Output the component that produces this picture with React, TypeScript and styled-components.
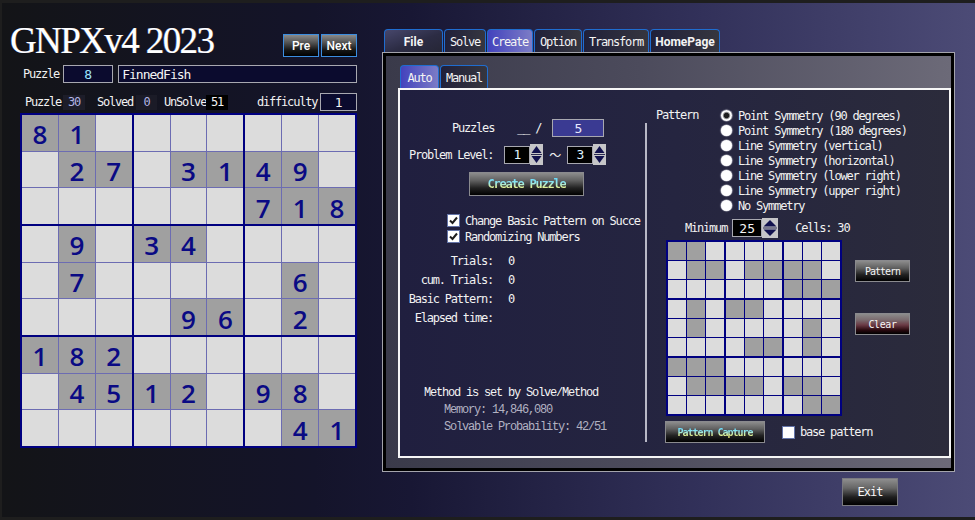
import React from "react";
import styled, { createGlobalStyle } from "styled-components";

const GOTHIC = '"DejaVu Sans Mono", "Liberation Mono", "Noto Sans CJK JP", monospace';
const MINCHO = '"Liberation Mono", "DejaVu Sans Mono", monospace';
const SANS = 'Roboto, "Liberation Sans", sans-serif';

const Global = createGlobalStyle`
  html, body { margin: 0; padding: 0; background: #1e1e1e; }
  body { font-family: ${GOTHIC}; font-size: 12px; }
  #root { width: 975px; height: 520px; }
  * { box-sizing: border-box; }
`;

const Window = styled.div`
  width: 975px;
  height: 520px;
  border-top: 3px solid #1e1e1e;
  border-left: 2px solid #1e1e1e;
  border-bottom: 3px solid #1e1e1e;
  background: linear-gradient(90deg, #131417 0%, #14142a 32%, #181734 42%, #32315a 72%, #4c4b76 100%);
  display: flex;
  padding-left: 8px;
  overflow: hidden;
  color: #f2f2f2;
  font-family: ${GOTHIC};
  font-size: 12px;
  letter-spacing: -1.2px;
`;

/* ---------- left pane ---------- */
const LeftPane = styled.div`
  width: 347px;
  padding-top: 19px;
  display: flex;
  flex-direction: column;
`;

const TitleRow = styled.div`
  display: flex;
  justify-content: space-between;
  height: 37px;
`;

const Title = styled.h1`
  margin: 0;
  font-family: "Liberation Serif", "DejaVu Serif", serif;
  font-weight: normal;
  font-size: 37px;
  line-height: 37px;
  letter-spacing: -1.6px;
  color: #ffffff;
  text-shadow: -0.6px 0 rgba(90, 140, 255, 0.55), 0.6px 0 rgba(255, 200, 120, 0.45);
`;

const NavButtons = styled.div`
  display: flex;
  gap: 2px;
  margin-top: 12px;
`;

const NavButton = styled.button`
  width: 36px;
  height: 23px;
  padding: 0;
  border: 1px solid #3b8de0;
  background: linear-gradient(180deg, #8a8a8a 0%, #555 35%, #181818 70%, #000 100%);
  color: #fff;
  font-family: ${SANS};
  font-weight: 500;
  font-size: 12px;
  letter-spacing: 0;
`;

const PuzzleRow = styled.div`
  display: flex;
  align-items: center;
  margin-top: 6px;
  padding-left: 13px;
  height: 18px;
`;

const Label = styled.span`
  white-space: pre;
  color: #f2f2f2;
`;

const NumField = styled.div<{ $w: number; $bg?: string; $color?: string; $ml?: number }>`
  width: ${(p) => p.$w}px;
  height: 18px;
  margin-left: ${(p) => p.$ml ?? 0}px;
  border: 1px solid #a8a8b0;
  background: ${(p) => p.$bg ?? "#0b0b2e"};
  color: ${(p) => p.$color ?? "#f4f4f4"};
  display: flex;
  align-items: center;
  justify-content: center;
  font-size: 13px;
  letter-spacing: 0;
`;

const NameField = styled.div`
  flex: 1;
  height: 18px;
  margin-left: 5px;
  border: 1px solid #a8a8b0;
  background: #0b0b2e;
  color: #f4f4f4;
  font-size: 13px;
  letter-spacing: -1px;
  padding-left: 3px;
  display: flex;
  align-items: center;
`;

const StatsRow = styled.div`
  display: flex;
  align-items: center;
  margin-top: 10px;
  padding-left: 15px;
  height: 18px;
`;

const StatBox = styled.span<{ $w: number; $bg: string; $color: string; $ml: number }>`
  width: ${(p) => p.$w}px;
  height: 15px;
  margin-left: ${(p) => p.$ml}px;
  background: ${(p) => p.$bg};
  color: ${(p) => p.$color};
  display: inline-flex;
  align-items: center;
  justify-content: center;
`;

const StatText = styled.span<{ $ml: number }>`
  margin-left: ${(p) => p.$ml}px;
  white-space: pre;
`;

/* ---------- boards ---------- */
const Board = styled.div<{ $w: number; $h: number; $ml: number; $mt: number }>`
  width: ${(p) => p.$w}px;
  height: ${(p) => p.$h}px;
  margin-left: ${(p) => p.$ml}px;
  margin-top: ${(p) => p.$mt}px;
  border: 2px solid #000080;
  background: #000080;
  display: grid;
  grid-template-columns: repeat(3, 1fr);
  grid-template-rows: repeat(3, 1fr);
  gap: 2px;
  flex-shrink: 0;
`;

const Block = styled.div<{ $line: string }>`
  display: grid;
  grid-template-columns: repeat(3, 1fr);
  grid-template-rows: repeat(3, 1fr);
  gap: 1px;
  background: ${(p) => p.$line};
`;

const Cell = styled.div<{ $given: boolean }>`
  background: ${(p) => (p.$given ? "#a0a0a0" : "#dcdcdc")};
  display: flex;
  align-items: center;
  justify-content: center;
  padding-top: 3px;
  font-family: "Open Sans", "Noto Sans", sans-serif;
  font-weight: 600;
  font-size: 26px;
  letter-spacing: 0;
  color: #0a0a84;
  line-height: 1;
`;

const PatternCell = styled.div<{ $given: boolean }>`
  background: ${(p) => (p.$given ? "#a0a0a0" : "#dcdcdc")};
`;

/* ---------- right pane ---------- */
const RightPane = styled.div`
  margin-left: 25px;
  width: 573px;
  padding-top: 26px;
  display: flex;
  flex-direction: column;
`;

const TabStrip = styled.div`
  display: flex;
  gap: 1px;
  height: 23px;
  margin-left: 2px;
`;

type TabKind = "file" | "normal" | "active";

const tabBg: Record<TabKind, string> = {
  file: "linear-gradient(160deg, #47476c 0%, #2c2c44 55%, #262636 100%)",
  normal: "linear-gradient(90deg, #20203a 0%, #36363f 100%)",
  active: "linear-gradient(90deg, #4343bd 0%, #7c7cc6 100%)",
};

const Tab = styled.div<{ $w: number; $kind: TabKind; $sans?: boolean }>`
  width: ${(p) => p.$w}px;
  height: 23px;
  border: 1px solid #1f6dd0;
  border-bottom: none;
  border-radius: 4px 4px 0 0;
  background: ${(p) => tabBg[p.$kind]};
  display: flex;
  align-items: center;
  justify-content: center;
  color: #f4f4f4;
  font-family: ${(p) => (p.$sans ? SANS : GOTHIC)};
  font-weight: ${(p) => (p.$sans ? 700 : 400)};
  font-size: 12px;
  letter-spacing: ${(p) => (p.$sans ? "0" : "-1.2px")};
  padding-top: 1px;
`;

const Panel = styled.div`
  width: 573px;
  height: 420px;
  border: 1px solid #a4a4ac;
`;

const PageArea = styled.div`
  height: 100%;
  border: 3px solid #000;
  background: linear-gradient(90deg, #3a3a4a 0%, #4c4b5c 45%, #6c6a78 100%);
  padding: 9px 0 10px 12px;
  display: flex;
  flex-direction: column;
`;

const InnerBox = styled.div`
  flex: 1;
  border: 2px solid #f6f6f6;
  background: linear-gradient(90deg, #201f3f 0%, #252540 50%, #2b2b3b 100%);
  display: flex;
`;

const LeftCol = styled.div`
  width: 245px;
  padding-top: 29px;
  display: flex;
  flex-direction: column;
  flex-shrink: 0;
  overflow: hidden;
`;

const FormRow = styled.div<{ $h: number; $mt: number; $pl: number }>`
  display: flex;
  align-items: center;
  height: ${(p) => p.$h}px;
  margin-top: ${(p) => p.$mt}px;
  padding-left: ${(p) => p.$pl}px;
`;

const Tilde = styled.span`
  width: 12px;
  margin-left: 6px;
  margin-right: 6px;
  text-align: center;
  font-family: "Noto Sans CJK JP", sans-serif;
  font-size: 12px;
  letter-spacing: 0;
`;

const GlossButton = styled.button<{ $w: number; $h: number; $ml?: number; $tone?: "gray" | "red" }>`
  width: ${(p) => p.$w}px;
  height: ${(p) => p.$h}px;
  margin-left: ${(p) => p.$ml ?? 0}px;
  padding: 0;
  flex-shrink: 0;
  border: 1px solid #8a8a8e;
  background: ${(p) =>
    p.$tone === "red"
      ? "linear-gradient(180deg, #8c8c8c 0%, #7a6a6e 30%, #6a3a44 55%, #2a0a10 80%, #000 100%)"
      : "linear-gradient(180deg, #8c8c8c 0%, #606060 35%, #222 68%, #000 100%)"};
  color: #f4f4f4;
  font-family: ${GOTHIC};
  display: flex;
  align-items: center;
  justify-content: center;
`;

const GlowText = styled.span<{ $size: number; $char: number }>`
  font-weight: bold;
  font-size: ${(p) => p.$size}px;
  letter-spacing: ${(p) => p.$char - p.$size * 0.602}px;
  background: linear-gradient(180deg, #5fd8ff 0%, #8fe6f0 40%, #d8f0a0 70%, #f6ee70 100%);
  -webkit-background-clip: text;
  background-clip: text;
  color: transparent;
`;

const ButtonText = styled.span<{ $size: number; $char: number }>`
  font-size: ${(p) => p.$size}px;
  letter-spacing: ${(p) => p.$char - p.$size * 0.602}px;
  color: #f6f6f6;
`;

const CheckBoxBox = styled.span`
  width: 13px;
  height: 13px;
  border: 1px solid #6474a8;
  background: #fff;
  display: inline-flex;
  flex-shrink: 0;
`;

const CheckLine = styled.div<{ $mt: number; $pl: number }>`
  display: flex;
  align-items: center;
  height: 13px;
  gap: 5px;
  margin-top: ${(p) => p.$mt}px;
  padding-left: ${(p) => p.$pl}px;
  white-space: pre;
`;

const StatsList = styled.div`
  margin-top: 8px;
  display: flex;
  flex-direction: column;
`;

const StatLine = styled.div`
  display: flex;
  align-items: center;
  height: 19px;
`;

const StatName = styled.span`
  width: 93px;
  text-align: right;
  white-space: pre;
`;

const StatNum = styled.span`
  margin-left: 15px;
`;

const MethodBlock = styled.div`
  margin-top: 58px;
  font-family: ${MINCHO};
  display: flex;
  flex-direction: column;
`;

const MethodLine = styled.div<{ $indent: number; $dim?: boolean }>`
  height: 17px;
  line-height: 17px;
  padding-left: ${(p) => p.$indent}px;
  color: ${(p) => (p.$dim ? "#b2b2c2" : "#f4f4f4")};
  white-space: pre;
`;

const Separator = styled.div`
  width: 2px;
  height: 319px;
  margin-top: 33px;
  background: #b8b8c6;
  flex-shrink: 0;
`;

const RightCol = styled.div`
  flex: 1;
  padding-top: 18px;
  display: flex;
  flex-direction: column;
`;

const PatternSection = styled.div`
  display: flex;
`;

const PatternLabel = styled.div`
  width: 74px;
  padding-left: 9px;
  height: 15px;
  line-height: 15px;
`;

const RadioList = styled.div`
  display: flex;
  flex-direction: column;
`;

const RadioRow = styled.div`
  display: flex;
  align-items: center;
  gap: 6px;
  height: 15px;
  white-space: pre;
`;

const RadioDot = styled.span<{ $on?: boolean }>`
  width: 11px;
  height: 11px;
  border-radius: 50%;
  background: ${(p) =>
    p.$on
      ? "radial-gradient(circle, #1e1e1e 0 2.3px, #6a6a6a 2.8px, #bdbdbd 3.6px, #fff 4.2px)"
      : "#ffffff"};
  box-shadow: 0 0 1px 0.6px rgba(210, 210, 220, 0.8);
  flex-shrink: 0;
`;

const GridArea = styled.div`
  display: flex;
  margin-top: 2px;
`;

const SideButtons = styled.div`
  display: flex;
  flex-direction: column;
  gap: 31px;
  margin-left: 13px;
  padding-top: 20px;
`;

const CaptureRow = styled.div`
  display: flex;
  align-items: center;
  margin-top: 5px;
  padding-left: 18px;
`;

const BaseCheck = styled.span`
  width: 13px;
  height: 13px;
  margin-left: 17px;
  border: 1px solid #6474a8;
  background: #fff;
  flex-shrink: 0;
`;

const BaseLabel = styled.span`
  margin-left: 5px;
  font-size: 12px;
  letter-spacing: -1.2px;
`;

const ExitRow = styled.div`
  display: flex;
  justify-content: flex-end;
  padding-right: 57px;
  margin-top: 6px;
`;

const ExitButton = styled.button`
  width: 56px;
  height: 28px;
  padding: 0;
  border: 1px solid #7a7a80;
  background: linear-gradient(180deg, #8e8e8e 0%, #666 35%, #1e1e1e 70%, #000 100%);
  color: #f6f6f6;
  font-family: ${GOTHIC};
  font-size: 12px;
  letter-spacing: -1px;
`;

const SpinnerWrap = styled.span`
  display: inline-flex;
  flex-shrink: 0;
`;

/* ---------- small drawings ---------- */
function Spinner({ w, h }: { w: number; h: number }) {
  const mid = h / 2;
  return (
    <SpinnerWrap>
      <svg width={w} height={h} viewBox={`0 0 ${w} ${h}`}>
        <rect x="0" y="0" width={w} height={h} fill="#c6c6c8" />
        <polygon points={`${w / 2},2 ${w - 1.5},${mid - 1.5} 1.5,${mid - 1.5}`} fill="#12124e" />
        <rect x="1" y={mid - 0.5} width={w - 2} height="1" fill="#2a2a50" />
        <polygon points={`1.5,${mid + 1.5} ${w - 1.5},${mid + 1.5} ${w / 2},${h - 2}`} fill="#12124e" />
      </svg>
    </SpinnerWrap>
  );
}

function CheckBox() {
  return (
    <CheckBoxBox>
      <svg width="11" height="11" viewBox="0 0 11 11">
        <polyline points="2,5.5 4.5,8 9,2.5" fill="none" stroke="#1e1e1e" strokeWidth="2" />
      </svg>
    </CheckBoxBox>
  );
}

/* ---------- data ---------- */
const PUZZLE = [
  "81.......",
  ".27.3149.",
  "......718",
  ".9.34....",
  ".7.....6.",
  "....96.2.",
  "182......",
  ".4512.98.",
  ".......41",
];

const blocks = [0, 1, 2, 3, 4, 5, 6, 7, 8];

function SudokuBoard() {
  return (
    <Board $w={337} $h={335} $ml={10} $mt={2}>
      {blocks.map((b) => (
        <Block key={b} $line="#6c6cb2">
          {blocks.map((i) => {
            const r = Math.floor(b / 3) * 3 + Math.floor(i / 3);
            const c = (b % 3) * 3 + (i % 3);
            const ch = PUZZLE[r][c];
            const given = ch !== ".";
            return (
              <Cell key={i} $given={given}>
                {given ? ch : ""}
              </Cell>
            );
          })}
        </Block>
      ))}
    </Board>
  );
}

function PatternBoard() {
  return (
    <Board $w={176} $h={176} $ml={19} $mt={0}>
      {blocks.map((b) => (
        <Block key={b} $line="#000080">
          {blocks.map((i) => {
            const r = Math.floor(b / 3) * 3 + Math.floor(i / 3);
            const c = (b % 3) * 3 + (i % 3);
            return <PatternCell key={i} $given={PUZZLE[r][c] !== "."} />;
          })}
        </Block>
      ))}
    </Board>
  );
}

const radios = [
  "Point Symmetry (90 degrees)",
  "Point Symmetry (180 degrees)",
  "Line Symmetry (vertical)",
  "Line Symmetry (horizontal)",
  "Line Symmetry (lower right)",
  "Line Symmetry (upper right)",
  "No Symmetry",
];

export default function App() {
  return (
    <>
      <Global />
      <Window>
        <LeftPane>
          <TitleRow>
            <Title>GNPXv4 2023</Title>
            <NavButtons>
              <NavButton>Pre</NavButton>
              <NavButton>Next</NavButton>
            </NavButtons>
          </TitleRow>
          <PuzzleRow>
            <Label>Puzzle</Label>
            <NumField $w={50} $ml={4} $color="#9fe6ff">
              8
            </NumField>
            <NameField>FinnedFish</NameField>
          </PuzzleRow>
          <StatsRow>
            <StatText $ml={0}>Puzzle</StatText>
            <StatBox $w={22} $ml={2} $bg="#1d1d29" $color="#b2b4e4">
              30
            </StatBox>
            <StatText $ml={12}>Solved</StatText>
            <StatBox $w={21} $ml={3} $bg="#1b1b27" $color="#b2b4e4">
              0
            </StatBox>
            <StatText $ml={7}>UnSolve</StatText>
            <StatBox $w={22} $ml={0} $bg="#000" $color="#f4f4f4">
              51
            </StatBox>
            <StatText $ml={29}>difficulty</StatText>
            <NumField $w={37} $ml={3}>
              1
            </NumField>
          </StatsRow>
          <SudokuBoard />
        </LeftPane>

        <RightPane>
          <TabStrip>
            <Tab $w={59} $kind="file" $sans>
              File
            </Tab>
            <Tab $w={42} $kind="normal">
              Solve
            </Tab>
            <Tab $w={46} $kind="active">
              Create
            </Tab>
            <Tab $w={48} $kind="normal">
              Option
            </Tab>
            <Tab $w={66} $kind="normal">
              Transform
            </Tab>
            <Tab $w={70} $kind="normal" $sans>
              HomePage
            </Tab>
          </TabStrip>
          <Panel>
            <PageArea>
              <TabStrip>
                <Tab $w={39} $kind="active">
                  Auto
                </Tab>
                <Tab $w={48} $kind="normal">
                  Manual
                </Tab>
              </TabStrip>
              <InnerBox>
                <LeftCol>
                  <FormRow $h={18} $mt={0} $pl={52}>
                    <Label>Puzzles</Label>
                    <StatText $ml={23}>__ /</StatText>
                    <NumField $w={52} $ml={11} $bg="#3a3a92" $color="#e8e8ff">
                      5
                    </NumField>
                  </FormRow>
                  <FormRow $h={21} $mt={7} $pl={9}>
                    <Label>Problem Level:</Label>
                    <NumField $w={26} $ml={11} $bg="#000" $color="#dff0ff">
                      1
                    </NumField>
                    <Spinner w={13} h={21} />
                    <Tilde>〜</Tilde>
                    <NumField $w={26} $bg="#000" $color="#dff0ff">
                      3
                    </NumField>
                    <Spinner w={13} h={21} />
                  </FormRow>
                  <FormRow $h={24} $mt={7} $pl={69}>
                    <GlossButton $w={115} $h={24}>
                      <GlowText $size={12} $char={6}>
                        Create Puzzle
                      </GlowText>
                    </GlossButton>
                  </FormRow>
                  <CheckLine $mt={18} $pl={47}>
                    <CheckBox />
                    <span>Change Basic Pattern on Succe</span>
                  </CheckLine>
                  <CheckLine $mt={3} $pl={47}>
                    <CheckBox />
                    <span>Randomizing Numbers</span>
                  </CheckLine>
                  <StatsList>
                    <StatLine>
                      <StatName>Trials:</StatName>
                      <StatNum>0</StatNum>
                    </StatLine>
                    <StatLine>
                      <StatName>cum. Trials:</StatName>
                      <StatNum>0</StatNum>
                    </StatLine>
                    <StatLine>
                      <StatName>Basic Pattern:</StatName>
                      <StatNum>0</StatNum>
                    </StatLine>
                    <StatLine>
                      <StatName>Elapsed time:</StatName>
                    </StatLine>
                  </StatsList>
                  <MethodBlock>
                    <MethodLine $indent={24}>Method is set by Solve/Method</MethodLine>
                    <MethodLine $indent={44} $dim>
                      Memory: 14,846,080
                    </MethodLine>
                    <MethodLine $indent={44} $dim>
                      Solvable Probability: 42/51
                    </MethodLine>
                  </MethodBlock>
                </LeftCol>
                <Separator />
                <RightCol>
                  <PatternSection>
                    <PatternLabel>Pattern</PatternLabel>
                    <RadioList>
                      {radios.map((t, i) => (
                        <RadioRow key={t}>
                          <RadioDot $on={i === 0} />
                          <span>{t}</span>
                        </RadioRow>
                      ))}
                    </RadioList>
                  </PatternSection>
                  <FormRow $h={20} $mt={5} $pl={38}>
                    <Label>Minimum</Label>
                    <NumField $w={30} $ml={5} $bg="#000" $color="#f4f4f4">
                      25
                    </NumField>
                    <Spinner w={16} h={20} />
                    <StatText $ml={17}>Cells: 30</StatText>
                  </FormRow>
                  <GridArea>
                    <PatternBoard />
                    <SideButtons>
                      <GlossButton $w={55} $h={22}>
                        <ButtonText $size={10} $char={5}>
                          Pattern
                        </ButtonText>
                      </GlossButton>
                      <GlossButton $w={55} $h={22} $tone="red">
                        <ButtonText $size={10} $char={5.6}>
                          Clear
                        </ButtonText>
                      </GlossButton>
                    </SideButtons>
                  </GridArea>
                  <CaptureRow>
                    <GlossButton $w={100} $h={22}>
                      <GlowText $size={10} $char={5}>
                        Pattern Capture
                      </GlowText>
                    </GlossButton>
                    <BaseCheck />
                    <BaseLabel>base pattern</BaseLabel>
                  </CaptureRow>
                </RightCol>
              </InnerBox>
            </PageArea>
          </Panel>
          <ExitRow>
            <ExitButton>Exit</ExitButton>
          </ExitRow>
        </RightPane>
      </Window>
    </>
  );
}
